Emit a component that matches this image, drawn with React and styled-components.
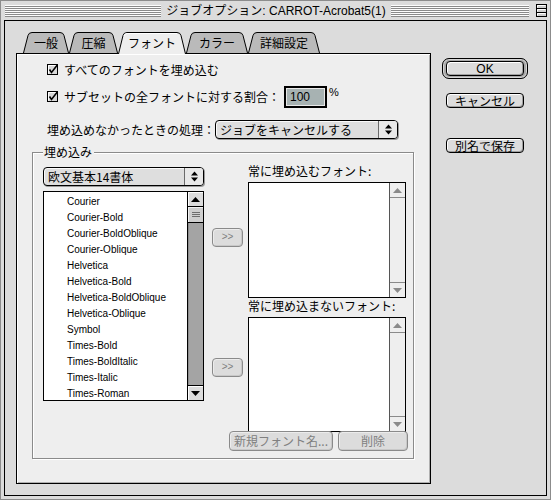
import React from "react";
import styled, { createGlobalStyle } from "styled-components";

const jp = `"Noto Sans CJK JP", "Noto Sans", sans-serif`;
const latin = `"Liberation Sans", "Noto Sans CJK JP", sans-serif`;

const GlobalStyle = createGlobalStyle`
  html, body { margin:0; padding:0; background:#dcdcdc; }
  * { box-sizing:border-box; }
`;

const Window = styled.div`
  width:551px;
  height:500px;
  border:1px solid #8c8c8c;
  background:#dcdcdc;
  padding:0 3px 3px 3px;
  display:flex;
  flex-direction:column;
  font-family:${jp};
  font-size:12px;
  color:#000;
`;

const TitleBar = styled.div`
  height:19px;
  display:grid;
  grid-template-columns:1fr auto 1fr;
  align-items:center;
  column-gap:5px;
  padding-left:1px;
`;

const Stripes = styled.div`
  height:12px;
  flex:1;
  background:repeating-linear-gradient(to bottom, #fdfdfd 0 1px, #8a8a8a 1px 2px);
`;

const TitleText = styled.div`
  font-family:${latin};
  font-size:12px;
  line-height:16px;
  white-space:nowrap;
`;

const TitleRight = styled.div`
  display:flex;
  align-items:center;
  gap:7px;
`;

const Frame = styled.div`
  flex:1;
  border:1px solid #000;
  background:#dcdcdc;
  display:flex;
  align-items:flex-start;
  padding:11px 0 0 11px;
`;

const LeftCol = styled.div`
  width:415px;
  display:flex;
  flex-direction:column;
`;

const TabRow = styled.div`
  height:21px;
  display:flex;
  margin-left:7px;
  position:relative;
  z-index:1;
`;

const Tab = styled.div`
  position:relative;
  width:${p => p.$w}px;
  height:22px;
  display:flex;
  align-items:center;
  justify-content:center;
  flex-shrink:0;
  svg { position:absolute; left:0; top:0; }
  span { position:relative; line-height:16px; }
`;

const Panel = styled.div`
  height:431px;
  border:1px solid #000;
  background:#eeeeee;
  box-shadow:inset 1px 1px 0 #fff, inset -1px -1px 0 #b0b0b0;
  display:flex;
  flex-direction:column;
  padding-top:8px;
`;

const Row = styled.div`
  display:flex;
  align-items:center;
  margin:${p => p.$mt || 0}px 0 0 30px;
  height:${p => p.$h || 16}px;
  line-height:16px;
  white-space:nowrap;
`;

const CheckText = styled.span`
  margin-left:5px;
`;

const NumField = styled.div`
  width:43px;
  height:22px;
  margin-left:4px;
  border:2px solid #000;
  box-shadow:inset 0 0 0 1px #e8e8e8;
  background:#a7b2b2;
  font-family:${latin};
  font-size:12px;
  line-height:18px;
  padding-left:4px;
`;

const Percent = styled.span`
  align-self:flex-start;
  margin:0 0 0 2px;
  font-family:${latin};
  font-size:11px;
  line-height:13px;
`;

const Popup = styled.div`
  width:${p => p.$w}px;
  height:19px;
  border:1px solid #000;
  border-radius:4px;
  background:#dedede;
  box-shadow:inset 1px 1px 0 #fafafa, 1px 1px 0 #9a9a9a;
  display:flex;
  align-items:stretch;
  flex-shrink:0;
  overflow:hidden;
`;

const PopupText = styled.div`
  flex:1;
  padding-left:4px;
  line-height:17px;
  white-space:nowrap;
`;

const PopupArrows = styled.div`
  width:19px;
  border-left:1px solid #6a6a6a;
  background:#e8e8e8;
  display:flex;
  align-items:center;
  justify-content:center;
`;

const Group = styled.div`
  margin:13px 16px 0 15px;
  border:1px solid #8a8a8a;
  box-shadow:1px 1px 0 #fff, inset 1px 1px 0 #fff;
  display:flex;
  flex-direction:column;
`;

const GroupLabel = styled.div`
  align-self:flex-start;
  margin:-9px 0 0 10px;
  padding:0 2px 0 1px;
  background:#eeeeee;
  line-height:16px;
`;

const GroupBody = styled.div`
  display:flex;
  align-items:flex-start;
`;

const SourceCol = styled.div`
  width:161px;
  margin:7px 0 0 10px;
  display:flex;
  flex-direction:column;
  gap:5px;
`;

const Targets = styled.div`
  margin:3px 0 0 8px;
  display:grid;
  grid-template-columns:31px 158px;
  column-gap:5px;
  grid-template-rows:16px 116px 16px 115px;
`;

const TargetLabel = styled.div`
  grid-column:2;
  line-height:16px;
  margin-top:${p => p.$mt || 0}px;
  white-space:nowrap;
`;

const ListBox = styled.div`
  height:${p => p.$h}px;
  border:1px solid #000;
  background:#fff;
  display:flex;
  overflow:hidden;
  grid-column:${p => p.$col || "auto"};
  margin-top:${p => p.$mt || 0}px;
`;

const Items = styled.div`
  flex:1;
  padding:2px 0 0 23px;
  overflow:hidden;
`;

const Item = styled.div`
  font-family:${latin};
  font-size:10px;
  line-height:16px;
  white-space:nowrap;
`;

const ScrollBar = styled.div`
  width:16px;
  border-left:1px solid ${p => (p.$active ? "#000" : "#555")};
  display:flex;
  flex-direction:column;
  background:${p => (p.$active ? "#a4a4a4" : "#eeeeee")};
`;

const ScrollArrow = styled.div`
  height:15px;
  flex-shrink:0;
  display:flex;
  align-items:center;
  justify-content:center;
  background:${p => (p.$active ? "#dcdcdc" : "#eeeeee")};
  border-${p => (p.$down ? "top" : "bottom")}:1px solid ${p => (p.$active ? "#000" : "#8a8a8a")};
  box-shadow:${p => (p.$active ? "inset 1px 1px 0 #fff" : "none")};
`;

const Thumb = styled.div`
  height:16px;
  flex-shrink:0;
  border-bottom:1px solid #000;
  background:#cfcfcf;
  box-shadow:inset 1px 1px 0 #f2f2f2;
  display:flex;
  flex-direction:column;
  justify-content:center;
  align-items:center;
  gap:1px;
  i { display:block; width:8px; height:1px; background:#6e6e6e; }
`;

const Track = styled.div`
  flex:1;
  box-shadow:${p => (p.$active ? "inset 1px 0 0 #8c8c8c" : "none")};
`;

const PushButton = styled.button`
  width:${p => p.$w}px;
  height:${p => p.$h || 15}px;
  padding:0;
  border:1px solid ${p => (p.$off ? "#8a8a8a" : "#000")};
  border-radius:4px;
  background:#dcdcdc;
  box-shadow:inset 1px 1px 0 ${p => (p.$off ? "#ececec" : "#fff")}, inset -1px -1px 0 ${p => (p.$off ? "#c8c8c8" : "#a0a0a0")};
  color:${p => (p.$off ? "#808080" : "#000")};
  font-family:${p => (p.$latin ? latin : jp)};
  font-size:${p => p.$fs || 12}px;
  line-height:12px;
  display:flex;
  align-items:center;
  justify-content:center;
  flex-shrink:0;
  white-space:nowrap;
`;

const MoveButton = styled(PushButton)`
  grid-column:1;
  grid-row:${p => p.$row};
  align-self:center;
  margin-top:${p => p.$mt || 0}px;
`;

const BottomRow = styled.div`
  display:flex;
  justify-content:flex-end;
  gap:5px;
  margin-top:5px;
  padding:0 5px 7px 0;
`;

const RightCol = styled.div`
  width:86px;
  margin:26px 0 0 11px;
  display:flex;
  flex-direction:column;
  align-items:center;
`;

const DefaultRing = styled.div`
  border:1px solid #000;
  border-radius:7px;
  padding:2px 3px;
  background:#a9a9a9;
  box-shadow:inset 0 0 0 1px #d6d6d6;
`;

const Spaced = styled.div`
  margin-top:${p => p.$mt}px;
`;

const Check = () => (
  <svg width="12" height="12" viewBox="0 0 12 12">
    <rect x="0.5" y="0.5" width="10" height="10" fill="#d8d8d8" stroke="#000" />
    <path d="M1.5 9.5V1.5H9.5" stroke="#fff" fill="none" />
    <path d="M2.5 5.5L4.5 8.5L10.5 0.8" stroke="#000" strokeWidth="1.6" fill="none" />
  </svg>
);

const UpDown = () => (
  <svg width="7" height="11" viewBox="0 0 7 11">
    <path d="M3.5 0.5L7 4.5H0Z M3.5 10.5L7 6.5H0Z" fill="#000" />
  </svg>
);

const Tri = ({ down, color }) => (
  <svg width="9" height="5" viewBox="0 0 9 5">
    <path d={down ? "M0 0H9L4.5 5Z" : "M4.5 0L9 5H0Z"} fill={color} />
  </svg>
);

const CollapseBox = () => (
  <svg width="11" height="13" viewBox="0 0 11 13">
    <rect x="0.5" y="0.5" width="10" height="12" fill="#cfcfcf" stroke="#000" />
    <path d="M1 4.5H10M1 8.5H10" stroke="#000" />
    <path d="M1.5 3.5V1.5H9.5M1.5 7.5V5.5H9.5M1.5 11.5V9.5H9.5" stroke="#fff" fill="none" />
  </svg>
);

const TabShape = ({ w, active }) => (
  <svg width={w} height="22" viewBox={`0 0 ${w} 22`}>
    <path
      d={`M0.5 ${active ? 22 : 21} L5 3.5 Q5.8 0.5 9 0.5 L${w - 9} 0.5 Q${w - 5.8} 0.5 ${w - 5} 3.5 L${w - 0.5} ${active ? 22 : 21}`}
      fill={active ? "#eeeeee" : "#bababa"}
      stroke="#000"
    />
    {active && <path d={`M6 4 Q6.6 1.5 9 1.5 L${w - 9} 1.5`} stroke="#fff" fill="none" />}
  </svg>
);

const tabs = [
  { label: "一般", w: 46 },
  { label: "圧縮", w: 49 },
  { label: "フォント", w: 68, active: true },
  { label: "カラー", w: 62 },
  { label: "詳細設定", w: 72 },
];

const fonts = [
  "Courier",
  "Courier-Bold",
  "Courier-BoldOblique",
  "Courier-Oblique",
  "Helvetica",
  "Helvetica-Bold",
  "Helvetica-BoldOblique",
  "Helvetica-Oblique",
  "Symbol",
  "Times-Bold",
  "Times-BoldItalic",
  "Times-Italic",
  "Times-Roman",
];

const Scroll = ({ active }) => (
  <ScrollBar $active={active}>
    <ScrollArrow $active={active}>
      <Tri color={active ? "#000" : "#8a8a8a"} />
    </ScrollArrow>
    {active && (
      <Thumb>
        <i />
        <i />
        <i />
      </Thumb>
    )}
    <Track $active={active} />
    <ScrollArrow $active={active} $down>
      <Tri down color={active ? "#000" : "#8a8a8a"} />
    </ScrollArrow>
  </ScrollBar>
);

const App = () => {
  return (
    <Window>
      <GlobalStyle />
      <TitleBar>
        <Stripes />
        <TitleText>ジョブオプション: CARROT-Acrobat5(1)</TitleText>
        <TitleRight>
          <Stripes />
          <CollapseBox />
        </TitleRight>
      </TitleBar>
      <Frame>
        <LeftCol>
          <TabRow>
            {tabs.map(t => (
              <Tab key={t.label} $w={t.w}>
                <TabShape w={t.w} active={t.active} />
                <span>{t.label}</span>
              </Tab>
            ))}
          </TabRow>
          <Panel>
            <Row>
              <Check />
              <CheckText>すべてのフォントを埋め込む</CheckText>
            </Row>
            <Row $mt={8} $h={22}>
              <Check />
              <CheckText>サブセットの全フォントに対する割合：</CheckText>
              <NumField>100</NumField>
              <Percent>%</Percent>
            </Row>
            <Row $mt={12} $h={19}>
              <span>埋め込めなかったときの処理：</span>
              <Popup $w={183}>
                <PopupText>ジョブをキャンセルする</PopupText>
                <PopupArrows>
                  <UpDown />
                </PopupArrows>
              </Popup>
            </Row>
            <Group>
              <GroupLabel>埋め込み</GroupLabel>
              <GroupBody>
                <SourceCol>
                  <Popup $w={161}>
                    <PopupText>欧文基本14書体</PopupText>
                    <PopupArrows>
                      <UpDown />
                    </PopupArrows>
                  </Popup>
                  <ListBox $h={210}>
                    <Items>
                      {fonts.map(f => (
                        <Item key={f}>{f}</Item>
                      ))}
                    </Items>
                    <Scroll active />
                  </ListBox>
                </SourceCol>
                <Targets>
                  <TargetLabel>常に埋め込むフォント:</TargetLabel>
                  <MoveButton $w={31} $h={19} $off $latin $fs={10} $row={2}>&gt;&gt;</MoveButton>
                  <ListBox $h={116} $col={2} $mt={3}>
                    <Items />
                    <Scroll />
                  </ListBox>
                  <TargetLabel $mt={3}>常に埋め込まないフォント:</TargetLabel>
                  <MoveButton $w={31} $h={19} $off $latin $fs={10} $row={4} $mt={-3}>&gt;&gt;</MoveButton>
                  <ListBox $h={115} $col={2} $mt={6}>
                    <Items />
                    <Scroll />
                  </ListBox>
                </Targets>
              </GroupBody>
              <BottomRow>
                <PushButton $w={104} $h={20} $off>新規フォント名...</PushButton>
                <PushButton $w={70} $h={20} $off>削除</PushButton>
              </BottomRow>
            </Group>
          </Panel>
        </LeftCol>
        <RightCol>
          <DefaultRing>
            <PushButton $w={78} $latin>OK</PushButton>
          </DefaultRing>
          <Spaced $mt={14}>
            <PushButton $w={78}>キャンセル</PushButton>
          </Spaced>
          <Spaced $mt={30}>
            <PushButton $w={78}>別名で保存</PushButton>
          </Spaced>
        </RightCol>
      </Frame>
    </Window>
  );
};

export default App;
